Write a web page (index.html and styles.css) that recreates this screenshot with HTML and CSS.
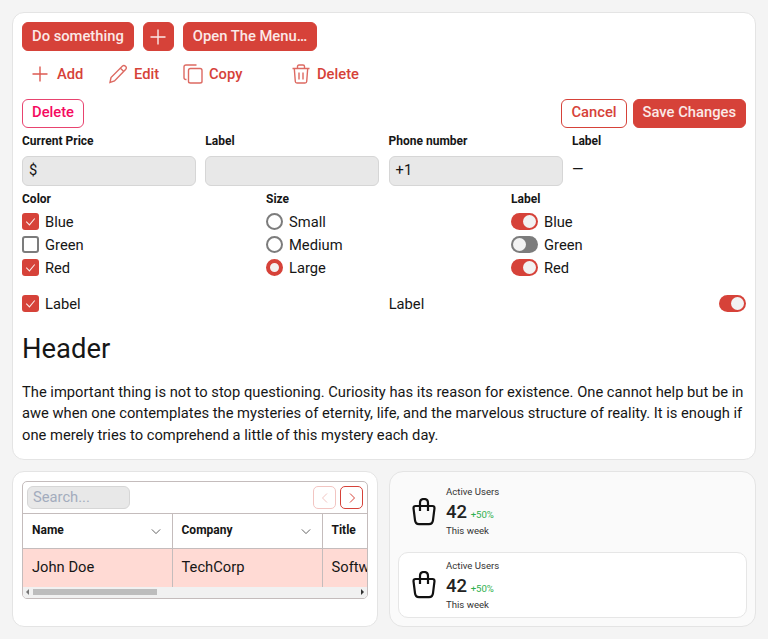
FILE: index.html
```html
<!DOCTYPE html>
<html>
  <head>
    <title>Components</title>
    <meta charset="utf-8">
    <link rel="stylesheet" href="styles.css">
  </head>
  <body>
    <svg class="defs" width="0" height="0">
      <symbol id="plus" viewBox="0 0 18 18"><path d="M9 1.500v15M1.500 9h15"/></symbol>
      <symbol id="check" viewBox="0 0 16 16"><path d="M4 8.200l3 3 5-6"/></symbol>
      <symbol id="chev" viewBox="0 0 12 8"><path d="M1 1.500l5 5 5-5"/></symbol>
      <symbol id="bag" viewBox="0 0 24 28"><path d="M3.500 8h17q2 0 2 2.200l-1.500 12q-.4 4-4 4H7q-3.600 0-4-4L1.500 10.200q0-2.200 2-2.200zM8 13V5q0-4 4-4t4 4v8"/></symbol>
    </svg>

    <div class="card main">
      <div class="row">
        <button class="btn solid">Do something</button>
        <button class="btn solid square"><svg class="ico plus"><use href="#plus"/></svg></button>
        <button class="btn solid">Open The Menu…</button>
      </div>

      <div class="row tools">
        <span class="tool add"><svg class="ico plus"><use href="#plus"/></svg>Add</span>
        <span class="tool edit">
          <svg class="ico big" viewBox="0 0 20 20"><path d="M2 18.500l1-5L14.500 2q1.500-1.200 3 .2t.3 3L6.500 17z M12.500 4.200l3.500 3.500"/></svg>Edit
        </span>
        <span class="tool copy">
          <svg class="ico big" viewBox="0 0 20 20"><path d="M3.500 15.500H3q-2 0-2-2V3q0-2 2-2h10.500M7.500 4.500h9.500q2 0 2 2v11q0 1.500-2 1.500H7.500q-2 0-2-1.500v-11q0-2 2-2z"/></svg>Copy
        </span>
        <span class="tool trash">
          <svg class="ico big" viewBox="0 0 20 20"><path d="M1.500 4.500h17M6.500 4.500V2.500q0-1.500 1.500-1.500h4q1.500 0 1.500 1.500v2M3.300 4.500l1 13q.1 1.500 1.700 1.500h8q1.600 0 1.700-1.500l1-13M8 8.500v7M12 8.500v7"/></svg>Delete
        </span>
      </div>

      <div class="row between">
        <button class="btn outline pink">Delete</button>
        <div class="row">
          <button class="btn outline">Cancel</button>
          <button class="btn solid">Save Changes</button>
        </div>
      </div>

      <div class="fields">
        <div class="field"><label>Current Price</label><div class="input">$</div></div>
        <div class="field"><label>Label</label><div class="input"></div></div>
        <div class="field"><label>Phone number</label><div class="input">+1</div></div>
        <div class="field"><label>Label</label><div class="plain">—</div></div>
      </div>

      <div class="groups">
        <div class="group">
          <label>Color</label>
          <div class="opt"><span class="box on"><svg><use href="#check"/></svg></span>Blue</div>
          <div class="opt"><span class="box"></span>Green</div>
          <div class="opt"><span class="box on"><svg><use href="#check"/></svg></span>Red</div>
        </div>
        <div class="group">
          <label>Size</label>
          <div class="opt"><span class="radio"></span>Small</div>
          <div class="opt"><span class="radio"></span>Medium</div>
          <div class="opt"><span class="radio on"></span>Large</div>
        </div>
        <div class="group">
          <label>Label</label>
          <div class="opt"><span class="toggle on"></span>Blue</div>
          <div class="opt"><span class="toggle"></span>Green</div>
          <div class="opt"><span class="toggle on"></span>Red</div>
        </div>
      </div>

      <div class="inline">
        <div class="opt"><span class="box on"><svg><use href="#check"/></svg></span>Label</div>
        <div class="inline-right">
          <span>Label</span>
          <span class="toggle on"></span>
        </div>
      </div>

      <h1>Header</h1>
      <p>The important thing is not to stop questioning. Curiosity has its reason for existence. One cannot help but be in awe when one contemplates the mysteries of eternity, life, and the marvelous structure of reality. It is enough if one merely tries to comprehend a little of this mystery each day.</p>
    </div>

    <div class="bottom">
      <div class="card table-card">
        <div class="table-wrap">
          <div class="table-top">
            <div class="search">Search...</div>
            <div class="pager">
              <span class="page off"><svg viewBox="0 0 8 12"><path d="M6 1.500L1.500 6 6 10.500"/></svg></span>
              <span class="page"><svg viewBox="0 0 8 12"><path d="M2 1.500L6.500 6 2 10.500"/></svg></span>
            </div>
          </div>
          <div class="table-scroll">
            <table>
              <tr>
                <th class="first"><div class="th">Name<svg class="chev"><use href="#chev"/></svg></div></th>
                <th><div class="th">Company<svg class="chev"><use href="#chev"/></svg></div></th>
                <th>Title</th>
              </tr>
              <tr class="hl">
                <td class="first">John Doe</td>
                <td>TechCorp</td>
                <td>Software Engineer</td>
              </tr>
            </table>
          </div>
          <div class="scrollbar">
            <span class="arrow left"></span>
            <span class="thumb"></span>
            <span class="arrow right"></span>
          </div>
        </div>
      </div>

      <div class="card stats">
        <div class="stat">
          <svg class="bag"><use href="#bag"/></svg>
          <div class="stat-body">
            <div class="stat-label">Active Users</div>
            <div class="stat-value">42 <span class="up">+50%</span></div>
            <div class="stat-label">This week</div>
          </div>
        </div>
        <div class="stat boxed">
          <svg class="bag"><use href="#bag"/></svg>
          <div class="stat-body">
            <div class="stat-label">Active Users</div>
            <div class="stat-value">42 <span class="up">+50%</span></div>
            <div class="stat-label">This week</div>
          </div>
        </div>
      </div>
    </div>
  </body>
</html>
```

FILE: styles.css
```css
* {
  box-sizing: border-box;
}
html, body {
  margin: 0;
  padding: 0;
}
body {
  background-color: #f4f4f4;
  color: #161616;
  font-family: Roboto, "Liberation Sans", sans-serif;
  font-size: 14.72px;
  padding: 12px;
  height: 639px;
  overflow: hidden;
}
.defs {
  position: absolute;
}
.card {
  background-color: #fff;
  border: 1px solid #e4e4e4;
  border-radius: 12px;
}
.main {
  padding: 9px;
  height: 448px;
}
.row {
  display: flex;
  gap: 9px;
  align-items: center;
}
.between {
  justify-content: space-between;
  margin-top: 11px;
}
.between .row {
  gap: 6px;
}
.between .btn {
  padding-bottom: 3px;
}
.btn {
  font-family: inherit;
  font-size: 14.75px;
  font-weight: 500;
  height: 29px;
  padding: 0 9px 2px;
  border-radius: 6px;
  border: 1px solid #d64239;
  display: inline-flex;
  align-items: center;
  justify-content: center;
}
.solid {
  background-color: #d64239;
  color: #fbe9e7;
}
.outline {
  background-color: #fff;
  color: #d64239;
}
.pink {
  color: #f50a5f;
  border-color: #e8436f;
}
.square {
  width: 31px;
  padding: 0;
}
.ico {
  fill: none;
  stroke: currentColor;
  stroke-width: 1.5;
}
.plus {
  width: 18px;
  height: 18px;
  stroke-width: 1.4;
}
.big {
  width: 20px;
  height: 20px;
  stroke: #dd6a62;
  stroke-width: 1.4;
}
.tools {
  margin-top: 9px;
  height: 28px;
  gap: 0;
}
.tool {
  display: inline-flex;
  align-items: center;
  color: #d64239;
  font-weight: 500;
  gap: 6px;
}
.add {
  margin-left: 9px;
  gap: 8px;
  width: 77px;
}
.add .plus {
  stroke: #dd5a52;
}
.edit {
  width: 75px;
}
.copy {
  width: 108px;
}
.fields {
  display: grid;
  grid-template-columns: repeat(4, 1fr);
  column-gap: 9.2px;
  margin-top: 5px;
}
label {
  display: block;
  font-size: 12px;
  font-weight: 700;
  line-height: 16px;
}
.input {
  margin-top: 7px;
  height: 30px;
  background-color: #e8e8e8;
  border: 1px solid #d6d6d6;
  border-radius: 6px;
  padding: 0 6px;
  line-height: 26px;
}
.plain {
  margin-top: 7px;
  line-height: 26px;
}
.groups {
  display: grid;
  grid-template-columns: 236px 237px 1fr;
  column-gap: 8px;
  margin-top: 5px;
}
.group label {
  margin-bottom: 3px;
}
.opt {
  display: flex;
  align-items: center;
  gap: 6px;
  height: 23px;
}
.box {
  width: 17px;
  height: 17px;
  border: 2px solid #7c7c7c;
  border-radius: 3px;
  background-color: #fff;
}
.box.on {
  border: none;
  background-color: #d64239;
}
.box svg {
  display: block;
  width: 17px;
  height: 17px;
  fill: none;
  stroke: #fbe9e7;
  stroke-width: 1;
}
.radio {
  width: 17px;
  height: 17px;
  border: 2px solid #7c7c7c;
  border-radius: 50%;
}
.radio.on {
  border: 4px solid #d64239;
  background-color: #f4f0f0;
}
.toggle {
  position: relative;
  display: inline-block;
  width: 27px;
  height: 17px;
  border-radius: 9px;
  background-color: #7c7c7c;
}
.toggle::after {
  content: "";
  position: absolute;
  top: 2px;
  left: 2px;
  width: 13px;
  height: 13px;
  border-radius: 50%;
  background-color: #f2f2f2;
}
.toggle.on {
  background-color: #d64239;
}
.toggle.on::after {
  left: 12px;
}
.inline {
  display: grid;
  grid-template-columns: 1fr 1fr;
  column-gap: 9.33px;
  margin-top: 13px;
}
.inline-right {
  display: flex;
  justify-content: space-between;
  align-items: center;
}
h1 {
  font-size: 27.4px;
  font-weight: 400;
  line-height: 36px;
  margin: 16px 0 0;
}
p {
  margin: 15px 0 0;
  line-height: 21.3px;
}
.bottom {
  display: grid;
  grid-template-columns: 366px 367px;
  column-gap: 11px;
  margin-top: 11px;
}
.table-card {
  height: 156px;
  padding: 9px;
}
.table-wrap {
  border: 1px solid #c4bcbc;
  border-radius: 5px;
  overflow: hidden;
}
.table-top {
  display: flex;
  justify-content: space-between;
  align-items: center;
  height: 31px;
  padding: 0 4px;
}
.search {
  width: 103px;
  height: 23px;
  background-color: #e8e8e8;
  border: 1px solid #d6d6d6;
  border-radius: 6px;
  padding: 0 5px;
  line-height: 21px;
  color: #a3acbd;
}
.pager {
  display: flex;
  gap: 4px;
}
.page {
  display: flex;
  align-items: center;
  justify-content: center;
  width: 23px;
  height: 23px;
  border: 1px solid #d64239;
  border-radius: 5px;
}
.page svg {
  width: 8px;
  height: 12px;
  fill: none;
  stroke: #d64239;
  stroke-width: 1;
}
.page.off {
  opacity: 0.3;
}
.table-scroll {
  overflow: hidden;
}
table {
  border-collapse: collapse;
  table-layout: fixed;
  width: 449px;
}
th, td {
  width: 150px;
  padding: 0 9px;
  text-align: left;
  white-space: nowrap;
  border-left: 1px solid #c4bcbc;
}
.first {
  width: 149px;
  border-left: none;
}
th {
  height: 35px;
  padding-bottom: 2px;
  font-size: 12px;
  font-weight: 700;
  border-top: 1px solid #c4bcbc;
  border-bottom: 1px solid #c4bcbc;
}
td {
  height: 38px;
  padding-bottom: 2px;
  background-color: #ffdad4;
}
.th {
  display: flex;
  justify-content: space-between;
  align-items: center;
}
.chev {
  width: 10px;
  height: 7px;
  margin-top: 2px;
  margin-right: 2px;
  fill: none;
  stroke: #444;
  stroke-width: 1;
}
.scrollbar {
  display: flex;
  align-items: center;
  height: 11px;
  background-color: #f1f1f1;
  padding: 0 3px;
  position: relative;
}
.thumb {
  width: 124px;
  height: 6px;
  margin-left: 4px;
  background-color: #bdbdbd;
}
.arrow {
  width: 0;
  height: 0;
  border-top: 3px solid transparent;
  border-bottom: 3px solid transparent;
}
.arrow.left {
  border-right: 3px solid #777;
}
.arrow.right {
  margin-left: auto;
  border-left: 3px solid #333;
}
.stats {
  height: 156px;
  background-color: #fafafa;
  padding: 8px;
  border-radius: 14px;
}
.stat {
  display: flex;
  align-items: center;
  height: 64px;
  padding-left: 14px;
  gap: 10px;
}
.stat.boxed {
  background-color: #fff;
  border: 1px solid #e6e6e6;
  border-radius: 10px;
  height: 66px;
  margin-top: 8px;
  padding-left: 13px;
}
.stat-body {
  margin-bottom: 3px;
}
.boxed .stat-body {
  margin-bottom: 1px;
}
.bag {
  width: 24px;
  height: 28px;
  fill: none;
  stroke: #111;
  stroke-width: 2.2;
}
.stat-label {
  font-size: 9.6px;
  line-height: 13px;
  color: #333;
}
.stat-value {
  font-size: 18.5px;
  font-weight: 500;
  line-height: 20px;
  margin: 4px 0 -1px;
  color: #222;
}
.up {
  font-size: 9.6px;
  font-weight: 400;
  color: #2eaf4e;
  margin-left: -1px;
}
```
